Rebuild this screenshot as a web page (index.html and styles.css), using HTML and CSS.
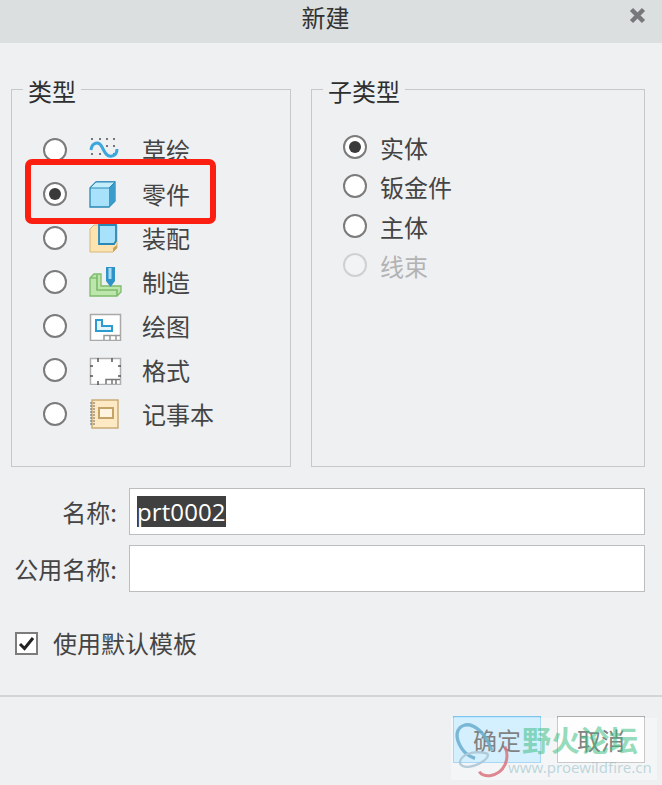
FILE: index.html
```html
<!DOCTYPE html>
<html lang="zh">
<head>
<meta charset="utf-8">
<title>新建</title>
<link rel="stylesheet" href="styles.css">
</head>
<body>
<div class="dialog">
  <header class="titlebar">
    <span class="title">新建</span>
    <svg class="close" width="17" height="17" viewBox="0 0 17 17"><path d="M2.500 2.500L14.500 14.500M14.500 2.500L2.500 14.500" stroke="#77787b" stroke-width="4.500"/></svg>
  </header>
  <div class="groups">
    <fieldset class="group group-type">
      <legend>类型</legend>
      <div class="type-list">
        <div class="type-row"><span class="radio"></span>
          <svg class="icon" width="34" height="30" viewBox="0 0 34 30"><g fill="#4a4f55"><circle cx="3" cy="4" r="1"/><circle cx="11" cy="4" r="1"/><circle cx="18" cy="4" r="1"/><circle cx="25" cy="4" r="1"/><circle cx="3" cy="19" r="1"/><circle cx="11" cy="19" r="1"/><circle cx="18" cy="11" r="1"/><circle cx="25" cy="11" r="1"/><circle cx="25" cy="19" r="1"/></g><path d="M2 15C3 7 10 6 13 12S18 22 23 21S28 16 28 14" fill="none" stroke="#3ba7dc" stroke-width="3"/></svg>
          <span class="type-label">草绘</span></div>
        <div class="type-row"><span class="radio on"></span>
          <svg class="icon" width="34" height="30" viewBox="0 0 34 30"><path d="M1 9L7 3H26V22L20 28H1Z" fill="#a8e2fa" stroke="#2a88b8" stroke-width="1.300"/><path d="M20 9V28L26 22V3Z" fill="#3a9ccb"/><path d="M1 9H20L26 3H7Z" fill="#c4edfc" stroke="#2a88b8"/></svg>
          <span class="type-label">零件</span></div>
        <div class="type-row"><span class="radio"></span>
          <svg class="icon" width="34" height="30" viewBox="0 0 34 30"><path d="M1 6L5 2H28V25L24 29H1Z" fill="#fde3b0" stroke="#d8b878"/><path d="M24 25H28V22L24 25ZM24 25V29L28 25Z" fill="#c9a25c"/><path d="M10 2H27V18L25 21H10Z" fill="#a8e2fa" stroke="#2a88b8" stroke-width="1.800"/></svg>
          <span class="type-label">装配</span></div>
        <div class="type-row"><span class="radio"></span>
          <svg class="icon" width="34" height="30" viewBox="0 0 34 30"><path d="M1 11L5 7H12V19H32V25L28 29H1Z" fill="#bde6ac" stroke="#7dba6a" stroke-width="1.300"/><path d="M8 8V23H28V29" fill="none" stroke="#7dba6a" stroke-width="1.600"/><path d="M1 11H8" stroke="#7dba6a" stroke-width="1.300"/><path d="M17 0H26V14L21.500 20L17 14Z" fill="#2f93c8"/><path d="M19.500 1H22.500V12H19.500Z" fill="#a8dcf5"/></svg>
          <span class="type-label">制造</span></div>
        <div class="type-row"><span class="radio"></span>
          <svg class="icon" width="34" height="30" viewBox="0 0 34 30"><rect x="1.500" y="3.500" width="30" height="26" fill="#fff" stroke="#a9a9a9" stroke-width="1.500"/><path d="M7 9H13V15H23V20H7Z" fill="#e3f4fb" stroke="#2b9bd0" stroke-width="2"/><path d="M15 29V24.500H31M21 24.500V29M27 24.500V29" fill="none" stroke="#999" stroke-width="1.500"/></svg>
          <span class="type-label">绘图</span></div>
        <div class="type-row"><span class="radio"></span>
          <svg class="icon" width="34" height="30" viewBox="0 0 34 30"><rect x="1.500" y="3.500" width="30" height="26" fill="#fff" stroke="#b0b0b0" stroke-width="1.500"/><path d="M9 3V7M23 3V7M1 11H4M29 11H32M1 21H4M29 21H32M9 26V30" stroke="#555" stroke-width="1.500"/><path d="M17 29V24.500H31M23 24.500V29M27 24.500V29" fill="none" stroke="#777" stroke-width="1.500"/></svg>
          <span class="type-label">格式</span></div>
        <div class="type-row"><span class="radio"></span>
          <svg class="icon" width="34" height="30" viewBox="0 0 34 30"><rect x="3" y="1" width="26" height="28" fill="#fde9c4" stroke="#c4a366" stroke-width="1.300"/><path d="M1 4H6M1 7H6M1 10H6M1 13H6M1 16H6M1 19H6M1 22H6M1 25H6" stroke="#666" stroke-width="1.200" stroke-dasharray="2 1"/><rect x="10" y="9" width="14" height="10" fill="#fff4df" stroke="#c4a366" stroke-width="2"/></svg>
          <span class="type-label">记事本</span></div>
      </div>
    </fieldset>
    <fieldset class="group group-sub">
      <legend>子类型</legend>
      <div class="sub-list">
        <div class="sub-row"><span class="radio on"></span><span class="sub-label">实体</span></div>
        <div class="sub-row"><span class="radio"></span><span class="sub-label">钣金件</span></div>
        <div class="sub-row"><span class="radio"></span><span class="sub-label">主体</span></div>
        <div class="sub-row disabled"><span class="radio off"></span><span class="sub-label">线束</span></div>
      </div>
    </fieldset>
  </div>
  <div class="fields">
    <div class="field"><label class="field-label">名称:</label><div class="input"><span class="selected">prt0002</span></div></div>
    <div class="field"><label class="field-label">公用名称:</label><div class="input"></div></div>
  </div>
  <div class="check-row">
    <span class="checkbox"><svg width="19" height="19" viewBox="0 0 19 19"><path d="M3 10L7.500 14.500L16 4" fill="none" stroke="#222" stroke-width="3"/></svg></span>
    <span>使用默认模板</span>
  </div>
  <footer class="footer">
    <button class="btn primary">确定</button>
    <button class="btn">取消</button>
  </footer>
  <div class="highlight"></div>
  <div class="watermark">
    <svg class="wm-logo" width="70" height="68" viewBox="0 0 210 204"><g fill="none"><path d="M125 105C105 50 70 25 45 30C15 38 15 70 35 100C45 115 60 125 75 130" stroke="#6aaecd" stroke-width="10"/><path d="M30 140C35 120 65 105 110 115C125 125 90 150 60 155C40 158 28 150 30 140" stroke="#a9c5d4" stroke-width="7"/><path d="M165 95C180 130 165 175 120 182C105 184 92 178 88 170" stroke="#d9757f" stroke-width="9"/></g></svg>
    <span class="wm-title">野火论坛</span>
    <span class="wm-url">www.proewildfire.cn</span>
  </div>
</div>
</body>
</html>
```
FILE: styles.css
```css
* { box-sizing: border-box; }
html, body { margin: 0; padding: 0; }
body {
  width: 662px;
  height: 785px;
  overflow: hidden;
  background: #eff0f2;
  color: #444;
  font-family: "Noto Sans CJK SC", "Noto Sans", sans-serif;
  font-size: 24px;
  line-height: 32px;
}
.dialog { position: relative; width: 662px; height: 785px; }
.titlebar {
  height: 43px;
  background: #dcdfe0;
  display: flex;
  justify-content: center;
  position: relative;
  padding-top: 4px;
}
.title { color: #333; line-height: 26px; height: 26px; margin-left: -11px; }
.close { position: absolute; top: 7px; right: 16px; }
.groups {
  display: flex;
  gap: 20px;
  padding: 32px 17px 0 11px;
}
.group {
  margin: 0;
  height: 392px;
  border: 1px solid #c6c8ca;
  padding: 0;
  min-width: 0;
}
.group legend { padding: 4px 5px 0; margin-left: 11px; color: #2e2e2e; line-height: 24px; }
.group-type { width: 280px; }
.group-sub { width: 334px; }
.type-list { display: flex; flex-direction: column; gap: 12px; padding: 31px 0 0 31px; }
.type-row { display: flex; align-items: center; height: 32px; }
.icon { margin-left: 22px; flex: none; }
.type-label { margin-left: 19px; }
.sub-list { display: flex; flex-direction: column; gap: 7.300px; padding: 28px 0 0 31px; }
.sub-row { display: flex; align-items: center; gap: 13px; height: 32px; }
.sub-label { margin-top: 2px; }
.disabled { color: #b3b3b3; }
.radio {
  flex: none;
  width: 24px;
  height: 24px;
  border-radius: 50%;
  background: #fff;
  border: 2px solid #7b7b7b;
  position: relative;
}
.radio.on::after {
  content: "";
  position: absolute;
  left: 4px;
  top: 4px;
  width: 12px;
  height: 12px;
  border-radius: 50%;
  background: #3a3a3a;
}
.radio.off { border-color: #cfd0d2; background: #f2f3f4; }
.fields { display: flex; flex-direction: column; gap: 10px; padding: 21px 17px 0 0; }
.field { display: flex; align-items: center; }
.field-label { width: 117px; text-align: right; margin-right: 12px; flex: none; }
.input {
  flex: 1;
  height: 47px;
  background: #fff;
  border: 1px solid #bcbdbf;
  padding: 7px 0 0 7px;
  display: flex;
  align-items: flex-start;
}
.selected {
  background: #404040;
  color: #fff;
  font-family: "Open Sans", "Noto Sans", sans-serif;
  font-size: 24px;
  line-height: 31px;
  height: 31px;
  letter-spacing: 0.1px;
}
.check-row { display: flex; align-items: center; gap: 15px; margin: 35px 0 0 15px; height: 32px; }
.checkbox {
  flex: none;
  width: 23px;
  height: 23px;
  border: 2px solid #7c7c7c;
  background: #fff;
  display: flex;
}
.footer {
  margin-top: 36px;
  border-top: 2px solid #d4d5d7;
  height: 90px;
  display: flex;
  justify-content: flex-end;
  gap: 16px;
  padding: 19px 17px 0 0;
}
.btn {
  width: 88px;
  height: 47px;
  background: #fdfdfd;
  border: 1px solid #adadad;
  color: #3e3e3e;
  font: inherit;
  padding: 0;
}
.btn.primary { background: #bee6fd; border-color: #7dc4ee; }
.highlight {
  position: absolute;
  left: 25px;
  top: 159px;
  width: 191px;
  height: 65px;
  border: 6px solid #fb1f12;
  border-radius: 7px;
}
.watermark {
  position: absolute;
  left: 451px;
  top: 718px;
  width: 206px;
  height: 62px;
  background: rgba(255, 255, 255, 0.35);
  pointer-events: none;
}
.wm-logo { position: absolute; left: -1px; top: -3px; opacity: .85; }
.wm-title {
  position: absolute;
  left: 71px;
  top: 2px;
  font-family: "Noto Sans CJK SC", sans-serif;
  font-weight: 700;
  font-size: 29px;
  line-height: 38px;
  white-space: nowrap;
  color: rgba(60, 190, 130, 0.55);
}
.wm-url {
  position: absolute;
  left: 57px;
  top: 39px;
  font-family: "Noto Sans", sans-serif;
  font-size: 15px;
  line-height: 20px;
  white-space: nowrap;
  color: rgba(120, 175, 185, 0.45);
}
```
